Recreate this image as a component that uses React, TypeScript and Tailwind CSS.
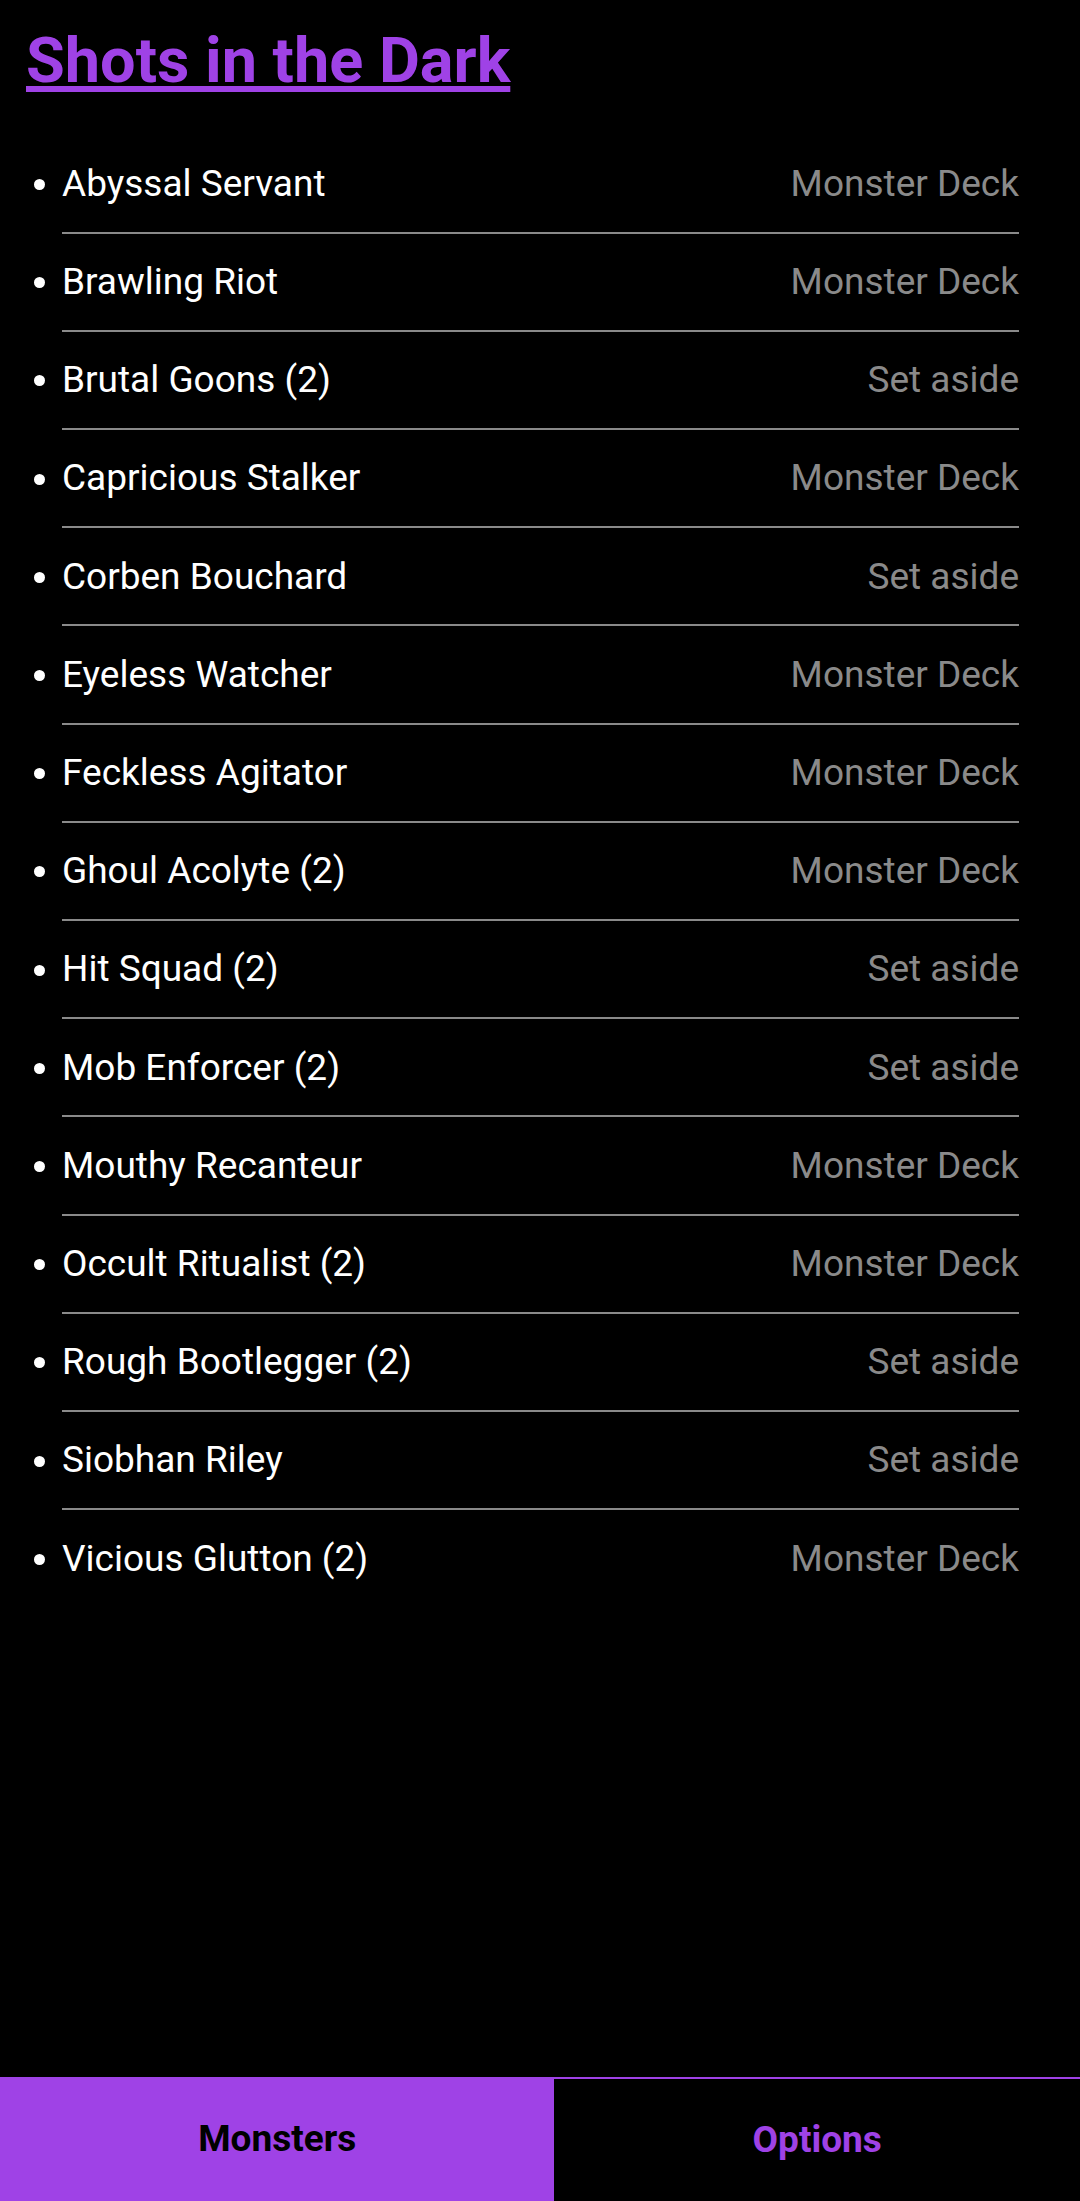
import React from "react";

type Monster = { name: string; place: string };

const monsters: Monster[] = [
  { name: "Abyssal Servant", place: "Monster Deck" },
  { name: "Brawling Riot", place: "Monster Deck" },
  { name: "Brutal Goons (2)", place: "Set aside" },
  { name: "Capricious Stalker", place: "Monster Deck" },
  { name: "Corben Bouchard", place: "Set aside" },
  { name: "Eyeless Watcher", place: "Monster Deck" },
  { name: "Feckless Agitator", place: "Monster Deck" },
  { name: "Ghoul Acolyte (2)", place: "Monster Deck" },
  { name: "Hit Squad (2)", place: "Set aside" },
  { name: "Mob Enforcer (2)", place: "Set aside" },
  { name: "Mouthy Recanteur", place: "Monster Deck" },
  { name: "Occult Ritualist (2)", place: "Monster Deck" },
  { name: "Rough Bootlegger (2)", place: "Set aside" },
  { name: "Siobhan Riley", place: "Set aside" },
  { name: "Vicious Glutton (2)", place: "Monster Deck" },
];

const App: React.FC = () => {
  return (
    <div className="flex flex-col h-[2201px] bg-black font-['Roboto',sans-serif] text-white">
      <div className="flex-1 overflow-hidden">
        <h1 className="pt-[14px] pl-[26px] text-[63px] font-bold leading-normal text-[#9f42e6] underline">
          Shots in the Dark
        </h1>
        <ul className="mt-[27px]">
          {monsters.map((m, idx) => (
            <li key={m.name} className="flex h-[98.2px]">
              <div className="w-[62px] shrink-0 flex items-center pl-[34px]">
                <span className="block w-[11px] h-[11px] rounded-full bg-white" />
              </div>
              <div
                className={
                  idx === monsters.length - 1
                    ? "flex-1 mr-[61px] flex items-center justify-between"
                    : "flex-1 mr-[61px] flex items-center justify-between border-b-2 border-[#8a8a8a]"
                }
              >
                <span className="text-[37px] leading-normal">{m.name}</span>
                <span className="text-[37px] leading-normal text-[#8a8a8a]">{m.place}</span>
              </div>
            </li>
          ))}
        </ul>
      </div>
      <nav className="flex h-[124px] shrink-0">
        <button className="flex-auto bg-[#9f42e6] text-black text-[37px] font-bold">Monsters</button>
        <button className="flex-auto bg-black text-[#9f42e6] text-[37px] font-bold border-t-2 border-[#9f42e6]">
          Options
        </button>
      </nav>
    </div>
  );
};

export default App;
